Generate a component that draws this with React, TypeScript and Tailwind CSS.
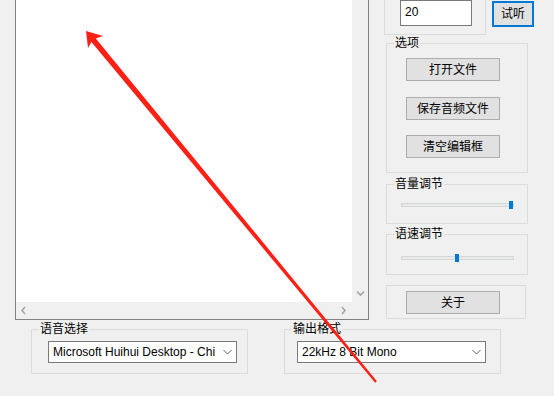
import type { ReactNode } from 'react';

const FONT = "font-['Liberation_Sans','Noto_Sans_CJK_SC',sans-serif]";

function Group({ label, className, children }: { label?: string; className: string; children?: ReactNode }) {
  return (
    <div className={`relative border-[#dcdcdc] ${className}`}>
      {label && (
        <span className="absolute left-[7px] top-[-8px] bg-[#f0f0f0] px-px text-[12px] leading-[14px] text-black">
          {label}
        </span>
      )}
      {children}
    </div>
  );
}

function WinButton({ children, className = '' }: { children: ReactNode; className?: string }) {
  return (
    <div
      className={`flex h-[23px] w-[94px] items-center justify-center border border-[#adadad] bg-[#e1e1e1] text-[12px] leading-none text-black ${className}`}
    >
      {children}
    </div>
  );
}

function Slider({ pos, className }: { pos: number; className: string }) {
  return (
    <div className={`relative ml-[14px] h-[4px] w-[113px] border border-[#d6d6d6] bg-[#e7eaea] ${className}`}>
      <div className="absolute top-[-3px] h-[8px] w-[4px] bg-[#0078d7]" style={{ left: pos }} />
    </div>
  );
}

function Chevron({ dir }: { dir: 'left' | 'right' | 'down' }) {
  const pts = {
    left: '5,1 2,4.5 5,8',
    right: '2,1 5,4.5 2,8',
    down: '1,2.5 4.5,6 8,2.5',
  }[dir];
  return (
    <svg width="9" height="9" viewBox="0 0 9 9">
      <polyline points={pts} fill="none" stroke="#a6a6a6" strokeWidth="1.6" />
    </svg>
  );
}

function Select({ text, className }: { text: string; className: string }) {
  return (
    <div className={`mt-[11px] flex h-[22px] w-[189px] items-center border border-[#7a7a7a] bg-white pl-[4px] pr-[4px] ${className}`}>
      <span className="flex-1 whitespace-nowrap text-[12px] leading-none text-black">{text}</span>
      <svg width="9" height="6" viewBox="0 0 9 6">
        <polyline points="0.5,1 4.5,5 8.5,1" fill="none" stroke="#606060" strokeWidth="1" />
      </svg>
    </div>
  );
}

export default function App() {
  return (
    <div className={`relative h-[396px] w-[554px] overflow-hidden bg-[#f0f0f0] ${FONT}`}>
      <div className="flex h-[320px]">
        {/* Text editor */}
        <div className="ml-[15px] flex h-[320px] w-[354px] flex-col border-x border-b border-[#828282] bg-white">
          <div className="flex flex-1">
            <div className="flex-1 bg-white" />
            <div className="flex w-[16px] flex-col justify-end bg-[#f0f0f0]">
              <div className="flex h-[17px] items-center justify-center">
                <Chevron dir="down" />
              </div>
            </div>
          </div>
          <div className="flex h-[17px] bg-[#f0f0f0]">
            <div className="flex w-[16px] items-center justify-center">
              <Chevron dir="left" />
            </div>
            <div className="flex-1" />
            <div className="flex w-[16px] items-center justify-center">
              <Chevron dir="right" />
            </div>
            <div className="w-[16px]" />
          </div>
        </div>

        {/* Right column */}
        <div className="ml-[15px] flex flex-col">
          <div className="flex">
            <Group className="h-[35px] w-[102px] border-x border-b">
              <div className="ml-[15px] h-[26px] w-[72px] border border-[#7a7a7a] bg-white pl-[4px] pt-[4px] text-[12px] leading-[14px] text-black">
                20
              </div>
            </Group>
            <div className="ml-[6px] mt-px flex h-[26px] w-[42px] items-center justify-center border-2 border-[#0078d7] bg-[#e1e1e1] text-[12px] text-black">
              试听
            </div>
          </div>

          <Group label="选项" className="ml-[2px] mt-[8px] h-[130px] w-[142px] border">
            <WinButton className="ml-[19px] mt-[14px]">打开文件</WinButton>
            <WinButton className="ml-[19px] mt-[16px]">保存音频文件</WinButton>
            <WinButton className="ml-[19px] mt-[15px]">清空编辑框</WinButton>
          </Group>

          <Group label="音量调节" className="ml-[2px] mt-[11px] h-[40px] w-[142px] border">
            <Slider pos={107} className="mt-[18px]" />
          </Group>

          <Group label="语速调节" className="ml-[2px] mt-[10px] h-[41px] w-[142px] border">
            <Slider pos={53} className="mt-[21px]" />
          </Group>

          <Group className="ml-[2px] mt-[10px] h-[34px] w-[140px] border">
            <WinButton className="ml-[19px] mt-[5px]">关于</WinButton>
          </Group>
        </div>
      </div>

      {/* Bottom row */}
      <div className="mt-[9px] flex">
        <Group label="语音选择" className="ml-[31px] h-[45px] w-[217px] border">
          <Select text="Microsoft Huihui Desktop - Chi" className="ml-[16px]" />
        </Group>
        <Group label="输出格式" className="ml-[36px] h-[45px] w-[217px] border">
          <Select text="22kHz 8 Bit Mono" className="ml-[12px]" />
        </Group>
      </div>

      {/* Annotation arrow */}
      <svg className="pointer-events-none absolute left-0 top-0" width="554" height="396" viewBox="0 0 554 396">
        <polygon
          points="86,31 103,36 95.8,38.5 376.9,381.2 375.1,382.8 91.4,42.1 88,48"
          fill="#ff2015"
        />
      </svg>
    </div>
  );
}
